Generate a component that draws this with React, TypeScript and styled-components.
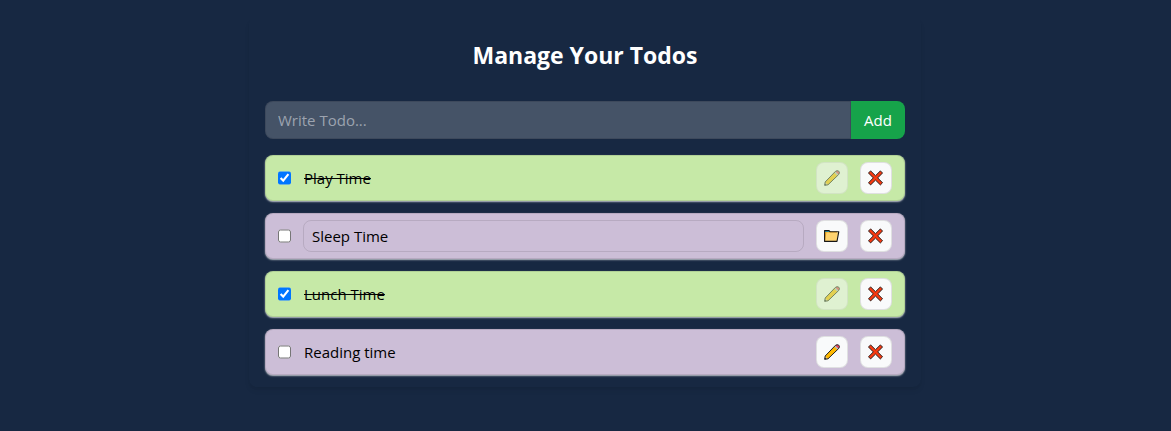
import React, { useState } from "react";
import styled, { createGlobalStyle } from "styled-components";

const GlobalStyle = createGlobalStyle`
  *, *::before, *::after { box-sizing: border-box; }
  body {
    margin: 0;
    background: #172842;
    color: #000;
    font-family: "Segoe UI", "Open Sans", "Noto Sans", sans-serif;
    font-size: 15px;
    line-height: 24px;
  }
  input, button { font: inherit; color: inherit; margin: 0; }
`;

const Page = styled.main`
  padding: 17px 1px 32px 0;
`;

const Card = styled.section`
  width: 100%;
  max-width: 672px;
  margin: 0 auto;
  padding: 12px 16px;
  border-radius: 8px;
  box-shadow: 0 4px 6px -1px rgba(0, 0, 0, 0.07), 0 2px 4px -2px rgba(0, 0, 0, 0.07);
`;

const Title = styled.h1`
  margin: 10px 0 30px;
  color: #fff;
  font-size: 23px;
  line-height: 32px;
  font-weight: 700;
  text-align: center;
`;

const AddForm = styled.form`
  display: flex;
  margin-bottom: 16px;
`;

const NewTodoInput = styled.input`
  flex: 1;
  min-width: 0;
  height: 38px;
  padding: 6px 12px;
  border: 1px solid rgba(0, 0, 0, 0.1);
  border-radius: 8px 0 0 8px;
  outline: none;
  background: rgba(255, 255, 255, 0.2);
  color: #fff;
  &::placeholder { color: #9ca3af; opacity: 1; }
`;

const AddButton = styled.button`
  flex-shrink: 0;
  min-width: 54px;
  padding: 4px 12px;
  border: 0;
  border-radius: 0 8px 8px 0;
  background: #16a34a;
  color: #fff;
`;

const TodoList = styled.ul`
  display: flex;
  flex-direction: column;
  gap: 12px;
  margin: 0;
  padding: 0;
  list-style: none;
`;

const TodoRow = styled.li<{ $done: boolean }>`
  display: flex;
  gap: 12px;
  padding: 6px 12px;
  border: 1px solid rgba(0, 0, 0, 0.1);
  border-radius: 8px;
  background: ${(p) => (p.$done ? "#c6e9a7" : "#ccbed7")};
  box-shadow: 0 1px 2px rgba(255, 255, 255, 0.5), 0 1px 1px rgba(255, 255, 255, 0.3);
`;

const Check = styled.input`
  flex-shrink: 0;
  width: 13px;
`;

const TodoText = styled.input<{ $done: boolean; $editing: boolean }>`
  flex: 1;
  min-width: 0;
  padding: ${(p) => (p.$editing ? "0 8px" : "0")};
  border: 1px solid ${(p) => (p.$editing ? "rgba(0, 0, 0, 0.1)" : "transparent")};
  border-radius: 8px;
  outline: none;
  background: transparent;
  text-decoration: ${(p) => (p.$done ? "line-through" : "none")};
`;

const IconButton = styled.button`
  display: inline-flex;
  flex-shrink: 0;
  align-items: center;
  justify-content: center;
  width: 32px;
  height: 32px;
  padding: 0;
  border: 1px solid rgba(0, 0, 0, 0.1);
  border-radius: 8px;
  background: #f9fafb;
  &:disabled { opacity: 0.5; }
`;

const PencilIcon = () => (
  <svg width="16" height="16" viewBox="0 0 16 16" aria-hidden="true">
    <path d="M1 12 11.2 1.6 14.4 4.8 4 15H1Z" fill="#ffb900" />
    <path d="M1.2 12.2 3.8 14.8 .7 15.3Z" fill="#f3d5b0" />
    <path d="M10.3 2.7 11.7 1.3 14.7 4.3 13.3 5.7Z" fill="#b4b9bd" />
    <path d="M11.4 1.6Q13 0 14.6 1.4T14.4 4.6Z" fill="#e83f5b" />
    <path d="M.7 15.3 1.2 12 11.4 1.4Q13.2 0 14.8 1.2T14.6 4.6L4 14.8Z" fill="none" stroke="#222" strokeWidth="1" strokeLinejoin="round" />
    <path d="M.4 15.6 1 13.4 2.6 15Z" fill="#222" />
  </svg>
);

const FolderIcon = () => (
  <svg width="16" height="16" viewBox="0 0 16 16" aria-hidden="true">
    <path d="M.5 2.5H5L6 3.5H13V13.5H.5Z" fill="#f4a91f" />
    <path d="M.5 2.5H5L6 4H.5Z" fill="#28a6c7" />
    <path d="M2.5 4.5H14.5L12.8 13.5H1Z" fill="#ffd36f" />
    <path d="M.6 13.4V2.6H5L6 3.7H14.8L13 13.4Z" fill="none" stroke="#171717" strokeWidth="1.1" strokeLinejoin="round" />
  </svg>
);

const CrossIcon = () => (
  <svg width="16" height="16" viewBox="0 0 16 16" aria-hidden="true">
    <path
      d="M2.6 .9 7.5 5.7 12.4 .9 14.5 3 9.7 7.9 14.5 12.8 12.4 14.9 7.5 10.1 2.6 14.9 .5 12.8 5.3 7.9 .5 3Z"
      fill="#f8380f"
      stroke="#2b211e"
      strokeWidth="1"
      strokeLinejoin="round"
    />
  </svg>
);

type Todo = { id: number; text: string; done: boolean; editing: boolean };

const initialTodos: Todo[] = [
  { id: 1, text: "Play Time", done: true, editing: false },
  { id: 2, text: "Sleep Time", done: false, editing: true },
  { id: 3, text: "Lunch Time", done: true, editing: false },
  { id: 4, text: "Reading time", done: false, editing: false },
];

export default function App() {
  const [todos, setTodos] = useState(initialTodos);
  const [draft, setDraft] = useState("");

  const update = (id: number, change: Partial<Todo>) =>
    setTodos((all) => all.map((t) => (t.id === id ? { ...t, ...change } : t)));

  const add = (e: React.FormEvent) => {
    e.preventDefault();
    if (!draft.trim()) return;
    setTodos((all) => [{ id: Date.now(), text: draft, done: false, editing: false }, ...all]);
    setDraft("");
  };

  return (
    <>
      <GlobalStyle />
      <Page>
        <Card>
          <Title>Manage Your Todos</Title>
          <AddForm onSubmit={add}>
            <NewTodoInput
              type="text"
              aria-label="New todo"
              placeholder="Write Todo..."
              value={draft}
              onChange={(e) => setDraft(e.target.value)}
            />
            <AddButton type="submit">Add</AddButton>
          </AddForm>
          <TodoList>
            {todos.map((t) => (
              <TodoRow key={t.id} $done={t.done}>
                <Check
                  type="checkbox"
                  aria-label={`Done: ${t.text}`}
                  checked={t.done}
                  onChange={() => update(t.id, { done: !t.done })}
                />
                <TodoText
                  type="text"
                  aria-label="Todo text"
                  value={t.text}
                  readOnly={!t.editing}
                  $done={t.done}
                  $editing={t.editing}
                  onChange={(e) => update(t.id, { text: e.target.value })}
                />
                <IconButton
                  type="button"
                  aria-label={t.editing ? "Save" : "Edit"}
                  disabled={t.done}
                  onClick={() => update(t.id, { editing: !t.editing })}
                >
                  {t.editing ? <FolderIcon /> : <PencilIcon />}
                </IconButton>
                <IconButton
                  type="button"
                  aria-label="Delete"
                  onClick={() => setTodos((all) => all.filter((x) => x.id !== t.id))}
                >
                  <CrossIcon />
                </IconButton>
              </TodoRow>
            ))}
          </TodoList>
        </Card>
      </Page>
    </>
  );
}
